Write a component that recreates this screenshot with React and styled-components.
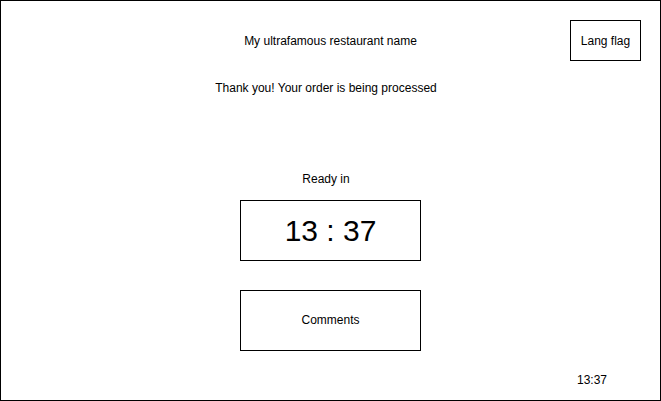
import styled, { createGlobalStyle } from "styled-components";

const GlobalStyle = createGlobalStyle`
  body {
    margin: 0;
    background: #ffffff;
    font-family: "Liberation Sans", Arial, sans-serif;
    color: #000000;
  }
`;

const Frame = styled.div`
  width: 661px;
  height: 401px;
  box-sizing: border-box;
  border: 1px solid #000;
  display: flex;
  flex-direction: column;
  align-items: center;
`;

const Header = styled.header`
  width: 100%;
  box-sizing: border-box;
  padding: 19px 19px 0;
  display: grid;
  grid-template-columns: 1fr auto 1fr;
  align-items: center;
`;

const Title = styled.h1`
  grid-column: 2;
  margin: 0;
  font-size: 12px;
  font-weight: normal;
  line-height: 14px;
`;

const LangButton = styled.button`
  grid-column: 3;
  justify-self: end;
  width: 71px;
  height: 41px;
  box-sizing: border-box;
  border: 1px solid #000;
  background: #fff;
  padding: 0;
  font-family: inherit;
  font-size: 12px;
  color: #000;
`;

const Text = styled.p`
  margin: ${(p) => p.$top}px 9px 0 0;
  font-size: 12px;
  line-height: 14px;
`;

const Box = styled.div`
  margin-top: ${(p) => p.$top}px;
  width: 181px;
  height: 61px;
  box-sizing: border-box;
  border: 1px solid #000;
  padding-bottom: ${(p) => p.$lift}px;
  display: flex;
  align-items: center;
  justify-content: center;
  font-size: ${(p) => p.$size}px;
`;

const Clock = styled.div`
  align-self: flex-end;
  margin: 22px 53px 0 0;
  font-size: 12px;
  line-height: 14px;
`;

export default function App() {
  return (
    <>
      <GlobalStyle />
      <Frame>
        <Header>
          <Title>My ultrafamous restaurant name</Title>
          <LangButton>Lang flag</LangButton>
        </Header>
        <Text $top={20}>Thank you! Your order is being processed</Text>
        <Text $top={77}>Ready in</Text>
        <Box $top={14} $size={30} $lift={0}>13 : 37</Box>
        <Box $top={29} $size={12} $lift={2}>Comments</Box>
        <Clock>13:37</Clock>
      </Frame>
    </>
  );
}
